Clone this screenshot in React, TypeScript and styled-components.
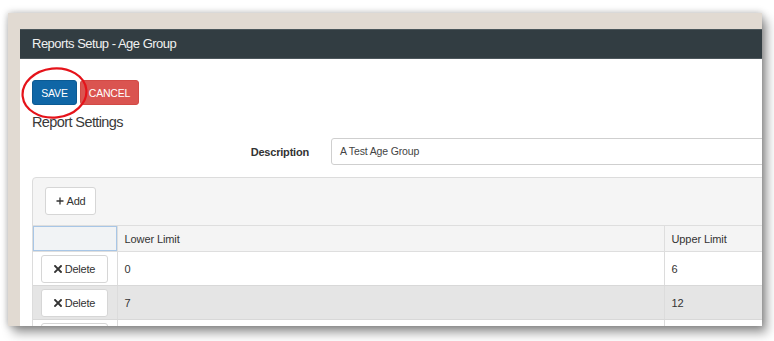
import React from "react";
import styled, { createGlobalStyle } from "styled-components";

const Global = createGlobalStyle`
  html, body { margin: 0; padding: 0; background: #ffffff; }
  body { font-family: "Liberation Sans", Arial, sans-serif; color: #333; }
  * { box-sizing: border-box; }
`;

const Stage = styled.div`
  width: 774px;
  height: 341px;
  padding: 13px 0 0 8px;
  overflow: hidden;
  background: #fff;
`;

const Window = styled.div`
  width: 754px;
  height: 313px;
  overflow: hidden;
  background: #e1dad2;
  padding: 16px 0 0 12px;
  display: flex;
  flex-direction: column;
  box-shadow: 0 0 7px rgba(0, 0, 0, 0.28), 5px 7px 10px rgba(0, 0, 0, 0.38);
  position: relative;
`;

const Header = styled.div`
  flex: 0 0 30px;
  background: #323d42;
  border-top: 1px solid #4b565b;
  border-bottom: 1px solid #4d575c;
  color: #f0f0f0;
  font-size: 13px;
  letter-spacing: -0.5px;
  line-height: 28px;
  padding-left: 12px;
  width: 900px;
`;

const Body = styled.div`
  flex: 1;
  background: #fff;
  padding-left: 12px;
  width: 900px;
  overflow: hidden;
  position: relative;
`;

const ButtonRow = styled.div`
  display: flex;
  gap: 3px;
  margin-top: 21px;
  position: relative;
  z-index: 1;
`;

const ActionButton = styled.button<{ $variant: "save" | "cancel" }>`
  height: 25px;
  width: ${(p) => (p.$variant === "save" ? "45px" : "59px")};
  border-radius: 3px;
  border: 1px solid ${(p) => (p.$variant === "save" ? "#0b5a93" : "#d24a45")};
  background: ${(p) => (p.$variant === "save" ? "#0f66a6" : "#da5450")};
  color: #fff;
  font-family: "Liberation Sans", Arial, sans-serif;
  font-size: 10.5px;
  letter-spacing: -0.2px;
  padding: 0;
`;

const Heading = styled.div`
  margin-top: 10px;
  font-size: 14.5px;
  letter-spacing: -0.6px;
  line-height: 15px;
  color: #3a3a3a;
`;

const FormRow = styled.div`
  display: grid;
  grid-template-columns: 277px 1fr;
  column-gap: 22px;
  align-items: center;
  margin-top: 8px;
`;

const Label = styled.label`
  text-align: right;
  font-weight: bold;
  font-size: 11px;
  letter-spacing: -0.2px;
  color: #333;
`;

const TextInput = styled.div`
  height: 27px;
  border: 1px solid #cfcfcf;
  border-radius: 3px;
  font-size: 10.5px;
  letter-spacing: -0.15px;
  line-height: 25px;
  padding-left: 8px;
  color: #444;
  background: #fff;
`;

const Panel = styled.div`
  margin-top: 12px;
  border: 1px solid #dcdcdc;
  border-radius: 4px;
  background: #f5f5f5;
`;

const Toolbar = styled.div`
  padding: 9px 12px 10px;
  display: flex;
`;

const GhostButton = styled.button<{ $w: number }>`
  height: 28px;
  width: ${(p) => p.$w}px;
  border: 1px solid #d6d6d6;
  border-radius: 3px;
  background: #fff;
  color: #333;
  font-family: "Liberation Sans", Arial, sans-serif;
  font-size: 11px;
  letter-spacing: -0.2px;
  display: flex;
  align-items: center;
  justify-content: center;
  gap: 3px;
  padding: 0;
`;

const Table = styled.table`
  border-collapse: collapse;
  width: 100%;
  table-layout: fixed;
  font-size: 11px;
  letter-spacing: -0.1px;
  color: #333;
`;

const HeadCell = styled.th<{ $focused?: boolean }>`
  height: 26px;
  text-align: left;
  font-weight: normal;
  padding: 0 0 0 7px;
  background: ${(p) => (p.$focused ? "#f1f3f5" : "#f4f4f4")};
  border-top: 1px solid #dedede;
  border-right: 1px solid #dedede;
  border-bottom: 1px solid #dedede;
  ${(p) => (p.$focused ? "box-shadow: inset 0 0 0 1px #a8c6e6;" : "")}
`;

const Row = styled.tr<{ $alt?: boolean }>`
  background: ${(p) => (p.$alt ? "#e5e5e5" : "#ffffff")};
`;

const Cell = styled.td`
  height: 34px;
  padding: 0 0 0 7px;
  border-right: 1px solid #dcdcdc;
  border-bottom: 1px solid #d8d8d8;
  vertical-align: middle;
`;

const ButtonCell = styled.td`
  height: 34px;
  padding: 3px 0 0 8px;
  border-right: 1px solid #dcdcdc;
  border-bottom: 1px solid #d8d8d8;
  vertical-align: top;
`;

const Annotation = styled.svg`
  position: absolute;
  left: 0px;
  top: 8px;
  pointer-events: none;
  z-index: 5;
`;

const XIcon = () => (
  <svg width="8" height="8" viewBox="0 0 8 8">
    <path d="M1 1 L7 7 M7 1 L1 7" stroke="#333" strokeWidth="1.9" strokeLinecap="square" />
  </svg>
);

const PlusIcon = () => (
  <svg width="8" height="8" viewBox="0 0 8 8">
    <path d="M4 0.5 V7.5 M0.5 4 H7.5" stroke="#333" strokeWidth="1.3" />
  </svg>
);

const rows = [
  { lower: "0", upper: "6" },
  { lower: "7", upper: "12" },
  { lower: "", upper: "" },
];

export default function App() {
  return (
    <>
      <Global />
      <Stage>
        <Window>
          <Header>Reports Setup - Age Group</Header>
          <Body>
            <ButtonRow>
              <ActionButton $variant="save">SAVE</ActionButton>
              <ActionButton $variant="cancel">CANCEL</ActionButton>
            </ButtonRow>
            <Heading>Report Settings</Heading>
            <FormRow>
              <Label>Description</Label>
              <TextInput>A Test Age Group</TextInput>
            </FormRow>
            <Panel>
              <Toolbar>
                <GhostButton $w={51}>
                  <PlusIcon />
                  Add
                </GhostButton>
              </Toolbar>
              <Table>
                <colgroup>
                  <col style={{ width: 84 }} />
                  <col style={{ width: 547 }} />
                  <col />
                </colgroup>
                <thead>
                  <tr>
                    <HeadCell $focused />
                    <HeadCell>Lower Limit</HeadCell>
                    <HeadCell>Upper Limit</HeadCell>
                  </tr>
                </thead>
                <tbody>
                  {rows.map((r, i) => (
                    <Row key={i} $alt={i % 2 === 1}>
                      <ButtonCell>
                        <GhostButton $w={67}>
                          <XIcon />
                          Delete
                        </GhostButton>
                      </ButtonCell>
                      <Cell>{r.lower}</Cell>
                      <Cell>{r.upper}</Cell>
                    </Row>
                  ))}
                </tbody>
              </Table>
            </Panel>
            <Annotation width="70" height="58" viewBox="0 0 70 58">
              <ellipse cx="34.5" cy="26" rx="32" ry="24.5" fill="none" stroke="#e5131a" strokeWidth="2.2" transform="rotate(-6 34.5 26)" />
            </Annotation>
          </Body>
        </Window>
      </Stage>
    </>
  );
}
